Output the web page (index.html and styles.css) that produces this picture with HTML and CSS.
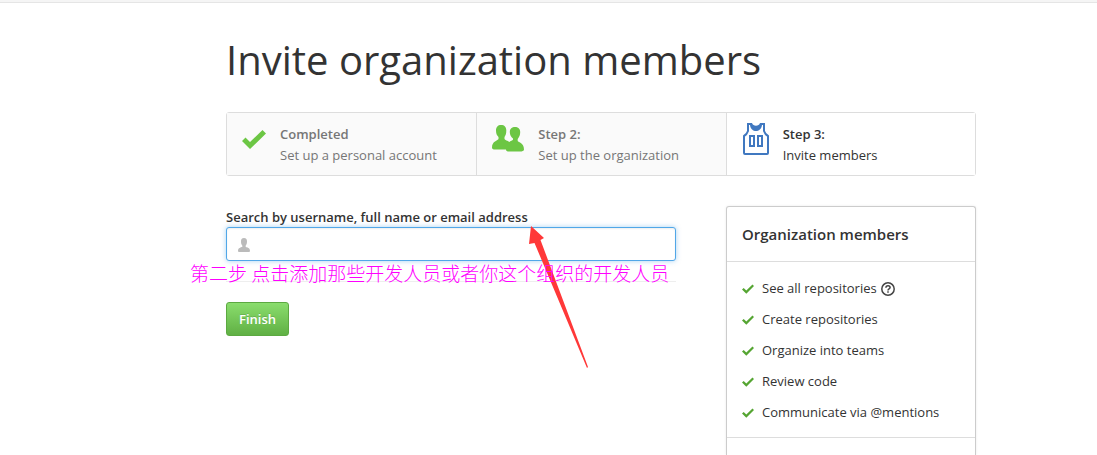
FILE: index.html
```html
<!DOCTYPE html>
<html lang="en">
<head>
<meta charset="utf-8">
<meta name="viewport" content="width=device-width, initial-scale=1">
<title>Invite organization members</title>
<link rel="stylesheet" href="styles.css">
</head>
<body>
<svg class="symbols" aria-hidden="true">
  <symbol id="check" viewBox="0 0 12 10"><path d="M0 5.500 1.700 4 4.300 6.600 10.500 0.500 12 2 4.300 9.800Z"/></symbol>
</svg>
<header class="topbar"></header>
<main class="page">
  <h1 class="title">Invite organization members</h1>
  <ol class="steps">
    <li class="step">
      <svg class="step-icon step-icon-check" viewBox="0 0 24 20" aria-hidden="true"><path d="M0 11 3.500 7.500 8 12 20.500 0 24 3.500 8 19Z"/></svg>
      <div class="step-body"><strong class="step-name">Completed</strong><span class="step-text">Set up a personal account</span></div>
    </li>
    <li class="step">
      <svg class="step-icon step-icon-people" viewBox="0 0 32 27" aria-hidden="true"><path d="M9 0C12.500 0 14.300 2 14.300 5.500C14.300 9 13.500 10.500 12.500 12V14C13 15.200 15.500 15.500 17.300 17C18.500 15.800 20.500 15.500 21 14.700V13.500C19 12 17.800 10 17.800 7C17.800 3.500 20 2 23 2C26 2 28.200 3.500 28.200 7C28.200 10.500 27.200 12 25.700 14V16C26.500 17.500 32 17.500 32 24.500C32 26 30 26.500 28 26.500H17C15 26.500 14 26 14 24.500H3C1 24.500 0 24 0 22.500C0 16 6 15.500 6.500 14V12C5 10.500 4 9 4 5.500C4 2 6 0 9 0Z"/></svg>
      <div class="step-body"><strong class="step-name">Step 2:</strong><span class="step-text">Set up the organization</span></div>
    </li>
    <li class="step step-current" aria-current="step">
      <svg class="step-icon step-icon-jersey" viewBox="0 0 26 32" aria-hidden="true"><path class="jersey-line" d="M5 1V8C4 11 3 12 1 13V30Q1 31 2 31H24Q25 31 25 30V13C23 12 22 11 21 8V1H18"/><path class="jersey-fill" d="M4 0H9C10 3.500 16 3.500 17 0H22V2H19C18 10 8 10 7 2H4Z"/><path class="jersey-line" d="M7 13H11V23H7ZM15 13H19V23H15Z"/></svg>
      <div class="step-body"><strong class="step-name">Step 3:</strong><span class="step-text">Invite members</span></div>
    </li>
  </ol>
  <div class="columns">
    <form class="invite">
      <label class="invite-label" for="member">Search by username, full name or email address</label>
      <div class="field">
        <input class="field-input" id="member" type="text">
        <svg class="field-icon" viewBox="0 0 12 14" aria-hidden="true"><path d="M6 0C8.300 0 9 1.500 9 3.500C9 5.500 8.500 6.500 7.700 7.500V9C9 9.500 12 9.500 12 13Q12 14 11 14H1Q0 14 0 13C0 9.500 3 9.500 4.300 9V7.500C3.500 6.500 3 5.500 3 3.500C3 1.500 3.700 0 6 0Z"/></svg>
        <svg class="arrow" viewBox="0 0 60 144" aria-hidden="true"><path d="M2 0 15 12 11.500 14 59 141 58 142 5.500 17 0 18Z"/></svg>
        <p class="note" lang="zh">第二步 点击添加那些开发人员或者你这个组织的开发人员</p>
      </div>
      <button class="finish" type="button">Finish</button>
    </form>
    <aside class="card">
      <h2 class="card-title">Organization members</h2>
      <ul class="perks">
        <li class="perk"><svg class="perk-icon" viewBox="0 0 12 10" aria-hidden="true"><use href="#check"/></svg><span>See all repositories</span><svg class="help" viewBox="0 0 14 14" role="img" aria-label="Help"><circle cx="7" cy="7" r="6.200"/><path d="M4.900 5.700C5 3.200 9.100 3.300 9.100 5.600C9.100 7 7 6.900 7 8.400M7 9.300V10.800"/></svg></li>
        <li class="perk"><svg class="perk-icon" viewBox="0 0 12 10" aria-hidden="true"><use href="#check"/></svg><span>Create repositories</span></li>
        <li class="perk"><svg class="perk-icon" viewBox="0 0 12 10" aria-hidden="true"><use href="#check"/></svg><span>Organize into teams</span></li>
        <li class="perk"><svg class="perk-icon" viewBox="0 0 12 10" aria-hidden="true"><use href="#check"/></svg><span>Review code</span></li>
        <li class="perk"><svg class="perk-icon" viewBox="0 0 12 10" aria-hidden="true"><use href="#check"/></svg><span>Communicate via @mentions</span></li>
      </ul>
      <div class="card-footer"></div>
    </aside>
  </div>
</main>
</body>
</html>
```
FILE: styles.css
```css
* { box-sizing: border-box; }
body {
  margin: 0;
  color: #333;
  background: #fff;
  font: 13px/21px "Open Sans", "Noto Sans", sans-serif;
}
.symbols { display: none; }
.topbar { height: 3px; background: #f5f5f5; border-bottom: 1px solid #e5e5e5; }
.page { max-width: 976px; padding-left: 226px; }
.title { margin: 0; padding: 27px 0 22px; font-size: 40px; line-height: 60px; font-weight: 400; white-space: nowrap; }
.steps {
  display: grid;
  grid-template-columns: repeat(3, 1fr);
  margin: 0 0 30px;
  padding: 0;
  list-style: none;
  border: 1px solid #ddd;
  border-radius: 3px;
}
.step { display: flex; align-items: flex-start; gap: 14px; padding: 10px 15px 9px; color: #767676; background: #fafafa; }
.step + .step { border-left: 1px solid #ddd; }
.step-current { padding-left: 16px; color: #333; background: #fff; }
.step-body { padding-top: 1px; }
.step-name, .step-text { display: block; }
.step-name { font-weight: 600; }
.step-icon { flex: none; fill: #6cc644; }
.step-icon-check { width: 24px; height: 20px; margin-top: 7px; }
.step-icon-people { width: 32px; height: 27px; margin-top: 2px; }
.step-icon-jersey { width: 26px; height: 32px; }
.jersey-line { fill: none; stroke: #4078c0; stroke-width: 2; }
.jersey-fill { fill: #4078c0; }
.columns { display: grid; grid-template-columns: 9fr 5fr; gap: 50px; align-items: start; }
.invite-label { display: block; padding-top: 1px; line-height: 20px; font-weight: 600; }
.field { position: relative; height: 55px; margin-bottom: 20px; border-bottom: 1px solid #eee; }
.field-input {
  display: block;
  width: 100%;
  height: 34px;
  padding: 6px 12px 6px 32px;
  font: inherit;
  color: #333;
  border: 1px solid #51a7e8;
  border-radius: 3px;
  outline: none;
  box-shadow: inset 0 1px 2px rgba(0, 0, 0, .07), 0 0 5px rgba(81, 167, 232, .5);
}
.field-icon { position: absolute; left: 12px; top: 11px; width: 12px; height: 14px; fill: #bbb; }
.note {
  position: absolute;
  left: -36px;
  top: 34px;
  margin: 0;
  color: #f0f;
  font: 300 19px/24px "Noto Sans CJK SC", sans-serif;
  white-space: nowrap;
}
.arrow { position: absolute; left: 303px; top: -1px; width: 60px; height: 144px; fill: #ff3838; }
.finish {
  padding: 6px 12px;
  color: #fff;
  font: inherit;
  line-height: 20px;
  font-weight: 600;
  text-shadow: 0 -1px 0 rgba(0, 0, 0, .15);
  background: linear-gradient(#8add6d, #60b044);
  border: 1px solid #5ca941;
  border-radius: 3px;
}
.card { border: 1px solid #ccc; border-bottom: 0; border-radius: 3px 3px 0 0; box-shadow: 0 0 3px rgba(0, 0, 0, .08); }
.card-title { margin: 0; padding: 17px 15px; font-size: 15px; line-height: 20px; font-weight: 600; border-bottom: 1px solid #ddd; }
.perks { display: grid; gap: 10px; margin: 0; padding: 16px 15px 14px; list-style: none; border-bottom: 1px solid #ddd; }
.perk { display: flex; align-items: center; }
.perk-icon { width: 12px; height: 10px; margin-right: 8px; fill: #55a532; }
.help { width: 14px; height: 14px; margin-left: 4px; fill: none; stroke: #444; stroke-width: 1.500; }
.card-footer { height: 17px; }
```
